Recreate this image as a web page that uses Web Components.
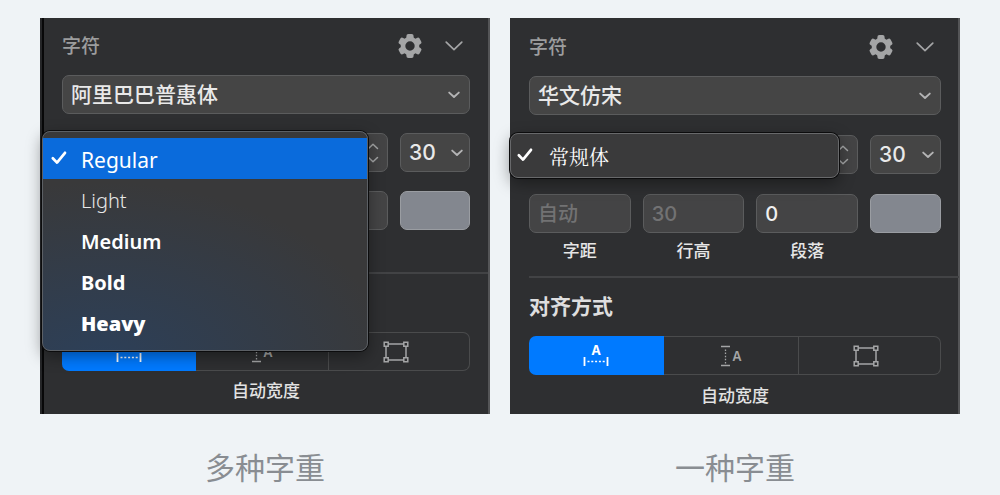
<!DOCTYPE html>
<html lang="zh-CN">
<head>
<meta charset="utf-8">
<meta name="viewport" content="width=device-width, initial-scale=1">
<title>字重</title>
<style>
  body {
    margin: 0;
    background: #eff3f6;
    font-family: Inter, "Noto Sans CJK SC", sans-serif;
  }
</style>
</head>
<body>
<weight-compare>
  <weight-figure caption="多种字重">
    <type-panel family="阿里巴巴普惠体" class="edge">
      <weight-menu slot="menu" class="tinted" label="字重">
        <weight-item selected highlighted>Regular</weight-item>
        <weight-item weight="light">Light</weight-item>
        <weight-item weight="medium">Medium</weight-item>
        <weight-item weight="bold">Bold</weight-item>
        <weight-item weight="heavy">Heavy</weight-item>
      </weight-menu>
    </type-panel>
  </weight-figure>
  <weight-figure caption="一种字重">
    <type-panel family="华文仿宋" class="roomy" captions>
      <weight-menu slot="menu" label="字重">
        <weight-item selected face="song">常规体</weight-item>
      </weight-menu>
    </type-panel>
  </weight-figure>
</weight-compare>

<script>
const ICONS = {
  gear: [24, 24, `<g transform="translate(12 12)"><circle r="7" fill="none" stroke="currentColor" stroke-width="4.6"/><g fill="currentColor">${[0, 60, 120, 180, 240, 300].map(a => `<rect x="-3.6" y="-12" width="7.2" height="6.6" rx="2" transform="rotate(${a})"/>`).join('')}</g></g>`],
  chevron: [18, 10, '<path d="M1.2 1.2 9 8.6l7.8-7.4" fill="none" stroke="currentColor" stroke-width="1.7" stroke-linecap="round" stroke-linejoin="round"/>'],
  caret: [12, 8, '<path d="M1.2 1.6 6 6l4.800-4.400" fill="none" stroke="currentColor" stroke-width="1.9" stroke-linecap="round" stroke-linejoin="round"/>'],
  stepper: [12, 20, '<path d="M1.500 5.500 6 1.200l4.500 4.300M1.500 14.500 6 18.800l4.500-4.300" fill="none" stroke="currentColor" stroke-width="1.500" stroke-linecap="round" stroke-linejoin="round"/>'],
  check: [16, 14, '<path d="M1.800 7.200 6 11.600 14 1.800" fill="none" stroke="currentColor" stroke-width="2.700" stroke-linecap="round" stroke-linejoin="round"/>'],
  autowidth: [26, 30, '<text x="13" y="14" text-anchor="middle" font-size="13" font-weight="700" fill="currentColor">A</text><path d="M1.500 16v9M24.500 16v9" stroke="currentColor" stroke-width="1.800"/><path d="M4.500 20.500h18" stroke="currentColor" stroke-width="1.500" stroke-dasharray="2 1.800"/>'],
  autoheight: [24, 22, '<path d="M2 1.500h9M2 20.500h9" stroke="currentColor" stroke-width="1.500"/><path d="M6.500 4.500v14" stroke="currentColor" stroke-width="1.300" stroke-dasharray="1.500 1.600"/><text x="18" y="16" text-anchor="middle" font-size="13" font-weight="600" fill="currentColor">A</text>'],
  fixed: [26, 22, '<g fill="none" stroke="currentColor" stroke-width="1.500"><path d="M5 3h16M5 19h16M3 5v12M23 5v12"/><path d="M1.200 1.200h4v4h-4zM20.800 1.200h4v4h-4zM1.200 16.800h4v4h-4zM20.800 16.800h4v4h-4z"/></g>']
};

function define(name, render) {
  customElements.define(name, class extends HTMLElement {
    connectedCallback() {
      if (this.shadowRoot) return;
      const template = document.createElement('template');
      template.innerHTML = render(this);
      this.attachShadow({ mode: 'open' }).append(template.content.cloneNode(true));
    }
  });
}

define('ui-icon', el => {
  const [w, h, body] = ICONS[el.getAttribute('name')];
  return `<style>
    :host { display: inline-flex; flex: none; }
    svg { display: block; overflow: visible; }
  </style><svg width="${w}" height="${h}" viewBox="0 0 ${w} ${h}" aria-hidden="true">${body}</svg>`;
});

define('weight-compare', () => `<style>
    :host { display: block; padding: 18px 40px 0; }
    main { display: grid; grid-template-columns: 1fr 1fr; gap: 20px; }
  </style><main><slot></slot></main>`);

define('weight-figure', el => `<style>
    :host { display: flex; }
    figure { margin: 0; flex: 1; display: flex; flex-direction: column; min-width: 0; }
    ::slotted(*) { flex: 1; }
    figcaption {
      margin-top: 30px; text-align: center;
      font: 400 30px/44px "Noto Sans CJK SC", sans-serif; color: #898d92;
    }
  </style><figure><slot></slot><figcaption>${el.getAttribute('caption')}</figcaption></figure>`);

define('ui-select', el => `<style>
    :host { display: block; position: relative; color: #b4b4b5; }
    select {
      appearance: none; display: block; box-sizing: border-box; width: 100%; height: 39px; margin: 0;
      padding: 0 30px 0 8px; border: 1px solid #5b5c5d; border-radius: 7px;
      background: #454545; color: #e9e9e9; font: 500 21px/30px Inter, "Noto Sans CJK SC", sans-serif;
    }
    ui-icon { position: absolute; right: var(--caret-inset, 10px); top: 16px; pointer-events: none; }
  </style><select aria-label="${el.getAttribute('label')}"><option>${el.getAttribute('value')}</option></select><ui-icon name="caret"></ui-icon>`);

define('ui-number', el => {
  const caption = el.getAttribute('caption');
  return `<style>
    :host { display: block; min-width: 0; }
    input {
      display: block; box-sizing: border-box; width: 100%; height: 39px; margin: 0; padding: 0 8px;
      border: 1px solid #5b5c5d; border-radius: 7px; background: #444445; color: #f0f0f0;
      font: 500 20px/28px Inter, "Noto Sans CJK SC", sans-serif;
    }
    input::placeholder { color: #727273; opacity: 1; }
    label, span { display: block; height: 24px; margin-top: 5px; padding-bottom: 1px; text-align: center; }
    label { font: 500 17px/24px "Noto Sans CJK SC", sans-serif; color: #e6e6e6; }
  </style><input id="n" type="text" value="${el.getAttribute('value') || ''}" placeholder="${el.getAttribute('placeholder') || ''}"${caption ? '' : ' aria-label="数值"'}>
  ${caption ? `<label for="n">${caption}</label>` : '<span></span>'}`;
});

define('align-bar', () => `<style>
    :host { display: block; }
    div { display: grid; grid-template-columns: 19fr 19fr 20fr; height: 39px; }
    button {
      display: flex; align-items: center; justify-content: center; margin: 0; padding: 0;
      border: solid #4a4b4c; border-width: 1px 1px 1px 0; background: none; color: #a4a5a6;
      font-family: Inter, sans-serif;
    }
    button:first-child { border: 0; border-radius: 7px 0 0 7px; background: #007aff; color: #fff; }
    button:last-child { border-radius: 0 7px 7px 0; padding-right: 6px; }
    p { margin: var(--note-gap) 0 0; text-align: center; font: 500 17px/24px "Noto Sans CJK SC", sans-serif; color: #e2e2e2; }
  </style><div role="group" aria-label="文本框">
    <button type="button" aria-pressed="true" aria-label="自动宽度"><ui-icon name="autowidth"></ui-icon></button>
    <button type="button" aria-pressed="false" aria-label="自动高度"><ui-icon name="autoheight"></ui-icon></button>
    <button type="button" aria-pressed="false" aria-label="固定尺寸"><ui-icon name="fixed"></ui-icon></button>
  </div><p>自动宽度</p>`);

define('type-panel', el => {
  const full = el.hasAttribute('captions');
  const cap = text => full ? `caption="${text}"` : '';
  return `<style>
    :host {
      --row-gap: 19px; --note-gap: 7px; --top: 13px; --rule-gap: 12px; --inset: 20px; --menu-left: -20px; --last: 70px;
      display: block; box-sizing: border-box; padding: var(--top) 18px 7px var(--inset);
      background: #2e2f31; border-right: 2px solid #545557; color: #a4a5a6;
    }
    :host(.edge) { border-left: 2px solid #242527; box-shadow: inset 2px 0 #070708; }
    :host(.roomy) {
      --row-gap: 20px; --note-gap: 8px; --top: 14px; --rule-gap: 13px; --inset: 19px; --menu-left: -19px; --last: 71px;
      padding-right: 17px;
    }
    header { display: flex; align-items: center; height: 30px; margin-bottom: 14px; padding-right: 7px; }
    h2 { flex: 1; margin: 0; padding-bottom: 2px; font: 500 19px/28px "Noto Sans CJK SC", sans-serif; color: #9c9d9e; }
    header button { display: flex; margin: 0; padding: 0; border: 0; background: none; color: inherit; }
    header button + button { margin-left: 23px; }
    .rows { display: grid; grid-template-columns: 1fr 1fr 1fr var(--last); gap: var(--row-gap) 12px; }
    .wide { grid-column: 1 / -1; }
    .weight { grid-column: span 3; position: relative; }
    .weight > button {
      display: flex; align-items: center; justify-content: flex-end; box-sizing: border-box;
      width: 100%; height: 39px; margin: 0; padding: 0 8px; border: 1px solid #5b5c5d;
      border-radius: 7px; background: #444445; color: #a4a5a6;
    }
    ::slotted(weight-menu) { position: absolute; z-index: 1; top: -2px; left: var(--menu-left); width: 100%; }
    .size { --caret-inset: 7px; }
    .swatch { height: 39px; box-sizing: border-box; padding: 0; border: 1px solid #9a9da2; border-radius: 7px; background: #83878f; }
    hr { height: 2px; margin: var(--rule-gap) -18px 12px 0; border: 0; background: #424345; }
    h3 { height: 30px; margin: 0 0 16px; font: 700 21px/30px "Noto Sans CJK SC", sans-serif; color: #dededf; }
  </style>
  <header>
    <h2>字符</h2>
    <button type="button" aria-label="设置"><ui-icon name="gear"></ui-icon></button>
    <button type="button" aria-label="收起"><ui-icon name="chevron"></ui-icon></button>
  </header>
  <div class="rows">
    <ui-select class="wide" label="字体" value="${el.getAttribute('family')}"></ui-select>
    <div class="weight">
      <button type="button" aria-haspopup="listbox" aria-expanded="true" aria-label="字重"><ui-icon name="stepper"></ui-icon></button>
      <slot name="menu"></slot>
    </div>
    <ui-select class="size" label="字号" value="30"></ui-select>
    <ui-number ${full ? 'placeholder="自动"' : ''} ${cap('字距')}></ui-number>
    <ui-number ${full ? 'placeholder="30"' : ''} ${cap('行高')}></ui-number>
    <ui-number ${full ? 'value="0"' : ''} ${cap('段落')}></ui-number>
    <button class="swatch" type="button" aria-label="颜色"></button>
  </div>
  <hr>
  <h3>${full ? '对齐方式' : ''}</h3>
  <align-bar></align-bar>`;
});

define('weight-menu', el => `<style>
    :host {
      display: block; box-sizing: border-box; padding: 1px 0; border: 1px solid #68696b; border-radius: 8px;
      background: #3a3a3b; box-shadow: 0 0 0 1px #0c0c0d, 0 5px 16px rgba(0, 0, 0, .4);
    }
    :host(.tinted) {
      padding: 6px 0 7px; border-color: #5c6065;
      background: radial-gradient(ellipse 90% 85% at 18% 108%, #2c405a, #39393a);
    }
  </style><div role="listbox" aria-label="${el.getAttribute('label')}"><slot></slot></div>`);

define('weight-item', el => `<style>
    :host { display: block; color: #fff; }
    button {
      display: flex; align-items: center; width: 100%; height: 41px; margin: 0; padding: 2px 8px 0; border: 0;
      background: none; color: inherit; text-align: left; font: 400 20px/30px "Noto Sans", sans-serif;
    }
    :host([highlighted]) button { background: #0a6bdc; font-size: 21px; }
    :host([weight="light"]) button { font-weight: 300; color: #e8e8e8; }
    :host([weight="medium"]) button { font-weight: 600; }
    :host([weight="bold"]) button { font-weight: 700; }
    :host([weight="heavy"]) button { font-weight: 900; }
    :host([face="song"]) button {
      padding-left: 6px; font-family: STFangsong, FangSong, "Noto Serif CJK SC", "Noto Sans CJK SC", serif;
    }
    .mark { display: flex; flex: none; width: 30px; padding-bottom: 4px; }
    :host([face="song"]) .mark { width: 32px; }
  </style><button type="button" role="option" aria-selected="${el.hasAttribute('selected')}">
    <span class="mark">${el.hasAttribute('selected') ? '<ui-icon name="check"></ui-icon>' : ''}</span><slot></slot>
  </button>`);
</script>
</body>
</html>
